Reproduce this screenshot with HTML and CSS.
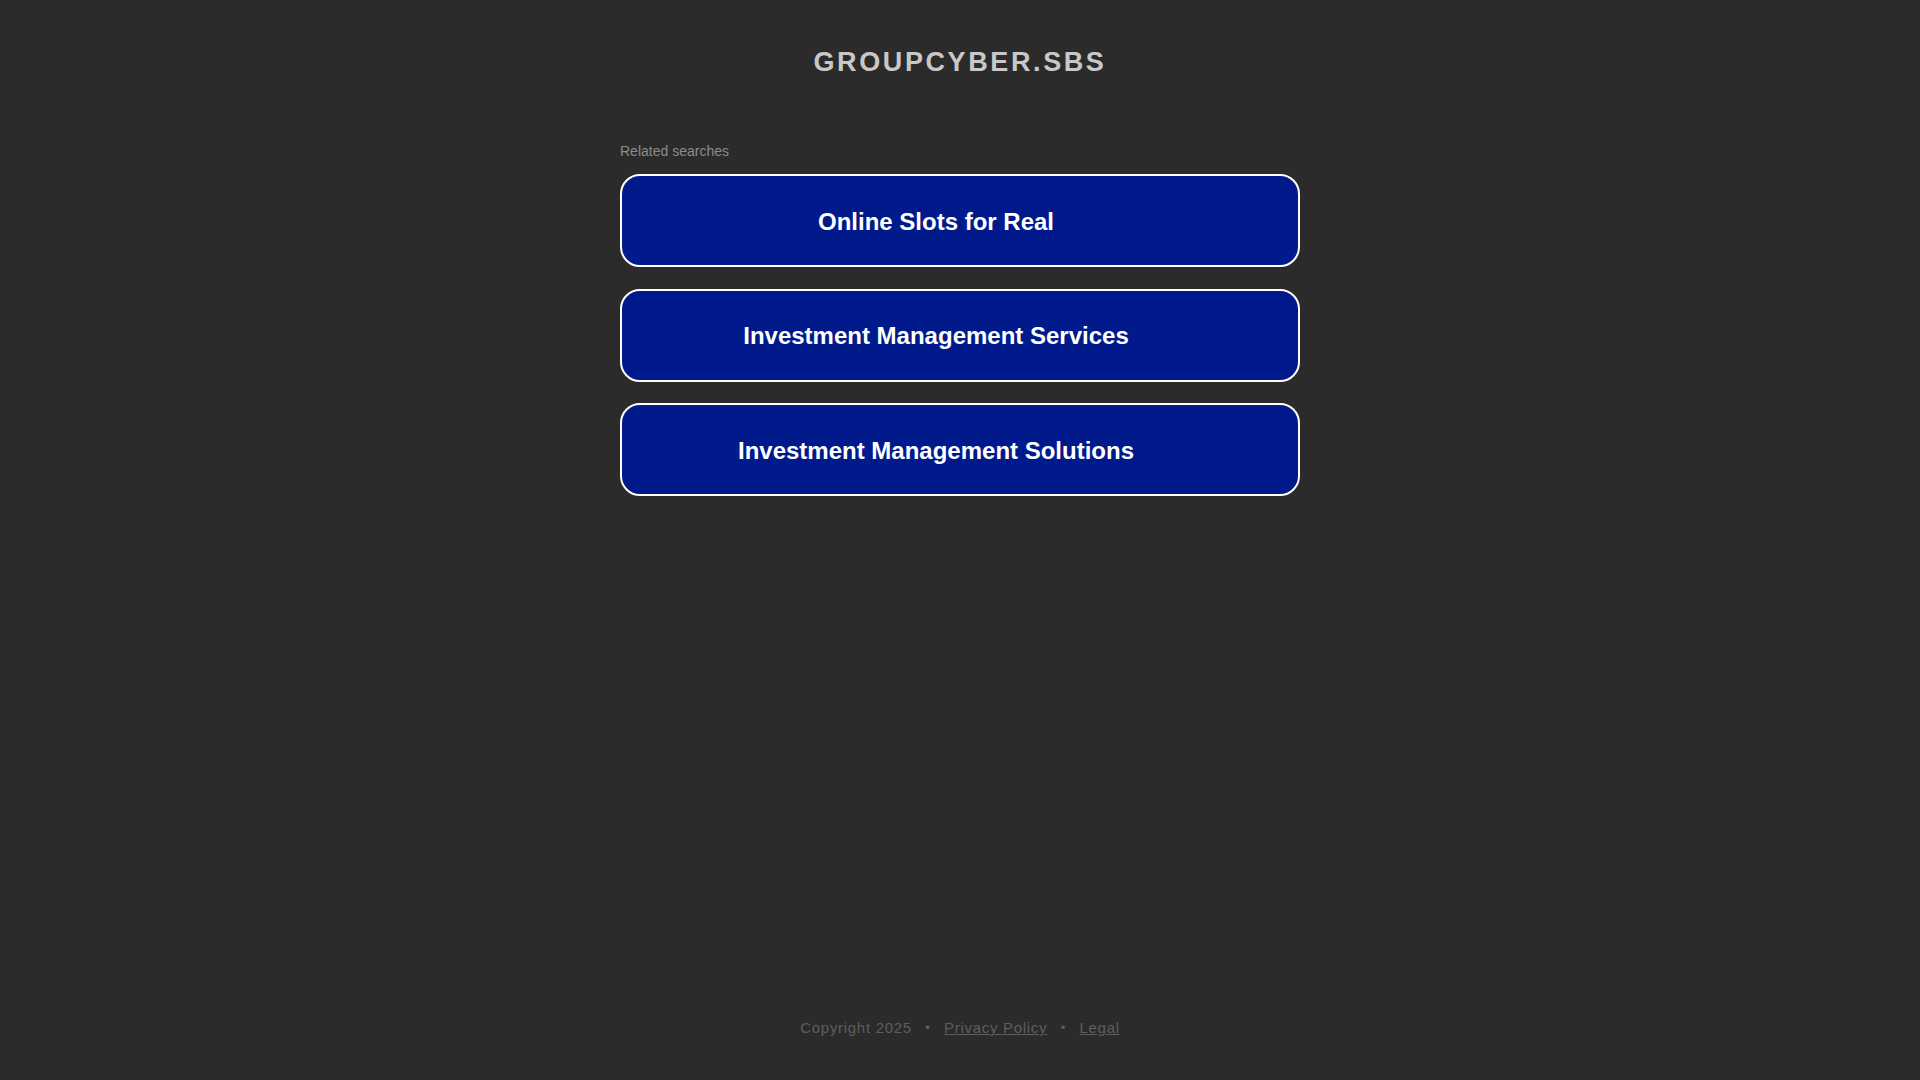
FILE: index.html
```html
<!DOCTYPE html>
<html lang="en">
<head>
<meta charset="utf-8">
<title>groupcyber.sbs</title>
<link rel="stylesheet" href="styles.css">
</head>
<body>
<div class="page">
  <header class="header">
    <h1 class="domain">GROUPCYBER.SBS</h1>
  </header>
  <main class="content">
    <p class="related-label">Related searches</p>
    <ul class="links">
      <li><a class="link-box" href="#"><span>Online Slots for Real</span></a></li>
      <li><a class="link-box" href="#"><span>Investment Management Services</span></a></li>
      <li><a class="link-box" href="#"><span>Investment Management Solutions</span></a></li>
    </ul>
  </main>
  <footer class="footer">
    <span class="copy">Copyright 2025</span>
    <span class="sep">•</span>
    <a class="foot-link" href="#">Privacy Policy</a>
    <span class="sep">•</span>
    <a class="foot-link" href="#">Legal</a>
  </footer>
</div>
</body>
</html>
```
FILE: styles.css
```css
html, body {
  margin: 0;
  padding: 0;
  background: #2b2b2b;
  font-family: "Liberation Sans", Arial, sans-serif;
}

.page {
  min-height: 100vh;
  display: flex;
  flex-direction: column;
  align-items: center;
}

.header {
  padding-top: 46px;
  text-align: center;
}

.domain {
  margin: 0;
  font-size: 27px;
  line-height: 32px;
  font-weight: bold;
  letter-spacing: 2.6px;
  color: #c8c8c8;
}

.content {
  width: 680px;
  margin-top: 65px;
  flex: 1;
}

.related-label {
  margin: 0 0 15px 0;
  font-size: 14px;
  line-height: 16px;
  color: #8c8c8c;
}

.links {
  list-style: none;
  margin: 0;
  padding: 0;
  display: flex;
  flex-direction: column;
  gap: 21.5px;
}

.link-box {
  box-sizing: border-box;
  height: 93px;
  display: flex;
  align-items: center;
  justify-content: center;
  padding: 2px 56px 0 8px;
  border: 2px solid #ffffff;
  border-radius: 20px;
  background: #011a8b;
  color: #ffffff;
  text-decoration: none;
  font-size: 24px;
  font-weight: bold;
}

.footer {
  padding: 0 0 43px 0;
  font-size: 15px;
  line-height: 18px;
  letter-spacing: 0.7px;
  color: #5e5e5e;
  display: flex;
  align-items: center;
}

.sep {
  margin: 0 13.5px;
  font-size: 13px;
}

.foot-link {
  color: #5e5e5e;
  text-decoration: underline;
}
```
